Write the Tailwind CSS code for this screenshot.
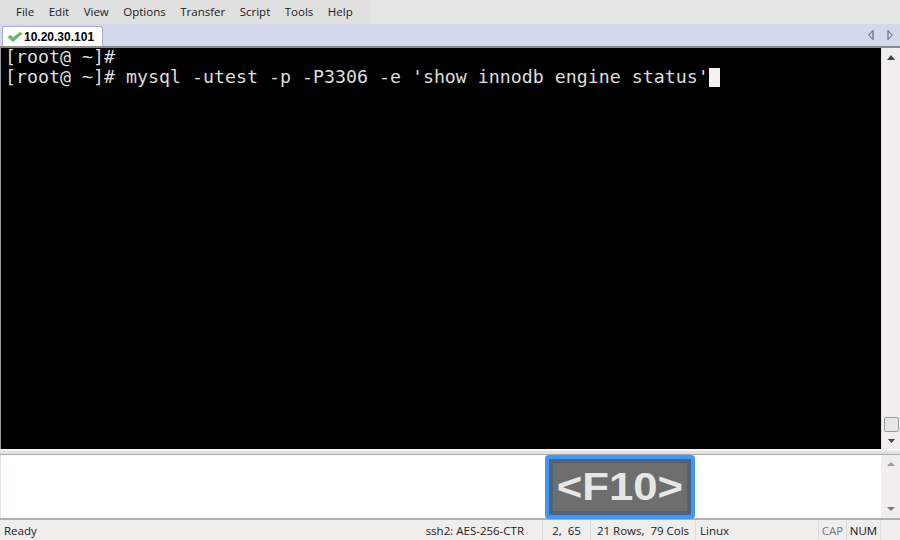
<!DOCTYPE html>
<html lang="en">
<head>
    <meta charset="UTF-8">
    <title>10.20.30.101</title>
    <script src="https://cdn.jsdelivr.net/npm/@tailwindcss/browser@4"></script>
</head>
<body class="w-[900px] h-[540px] overflow-hidden flex flex-col bg-[#f0eded] font-['Open_Sans','Liberation_Sans',sans-serif] text-[11.5px] text-[#111]">

    <!-- menu bar -->
    <div class="h-[24px] bg-[#e6e6e6] flex">
        <div class="w-[370px] bg-[#e0e0e0] flex items-center pl-[16px] pb-[1px] gap-[14.5px] text-[#1a1a1a]">
            <span>File</span><span>Edit</span><span>View</span><span>Options</span><span>Transfer</span><span>Script</span><span>Tools</span><span>Help</span>
        </div>
    </div>

    <!-- tab bar -->
    <div class="h-[22px] bg-[#d2d9ec] flex items-end justify-between pl-[2px]">
        <div class="h-[20px] w-[101px] bg-white border border-b-0 border-[#a9aebc] rounded-t-[3px] flex items-center pl-[4px] gap-[1px]">
            <svg width="16" height="13" viewBox="0 0 16 13"><path d="M.5 7l3-2 2.500 2.500L13 2l2.500 1.500L6 12z" fill="#62b562" stroke="#9bcf9b" stroke-width="0.5"/></svg>
            <span class="font-['Liberation_Sans',sans-serif] font-bold text-[12px] text-black">10.20.30.101</span>
        </div>
        <div class="flex items-center gap-[13px] h-[22px] pr-[7px]">
            <svg width="6" height="10" viewBox="0 0 6 10"><path d="M5 .5V9.500L.7 5z" fill="#d2d9ec" stroke="#555"/></svg>
            <svg width="6" height="10" viewBox="0 0 6 10"><path d="M1 .5V9.500L5.300 5z" fill="#d2d9ec" stroke="#555"/></svg>
        </div>
    </div>
    <div class="h-[2px] bg-[#8a8a8a]"></div>

    <!-- terminal -->
    <div class="h-[401px] flex">
        <div class="w-[881px] bg-black border-l border-[#999] text-[#dedede] pl-[4px] font-['DejaVu_Sans_Mono',monospace] text-[18.27px] leading-[20px]">
            <div class="mt-[-1px] whitespace-pre">[root@ ~]#</div>
            <div class="flex items-center"><span class="whitespace-pre">[root@ ~]# mysql -utest -p -P3306 -e 'show innodb engine status'</span><span class="w-[11px] h-[19px] bg-[#f2f2f2]"></span></div>
        </div>
        <div class="w-[19px] bg-[#f0eeee] border-l border-[#e4e4e4] flex flex-col items-center justify-between pt-[7px] pb-[6px]">
            <svg width="8" height="5" viewBox="0 0 8 5"><path d="M4 0l4 5H0z" fill="#444"/></svg>
            <div class="flex flex-col items-center gap-[7px]">
                <div class="w-[15px] h-[15px] bg-[#e6e6e6] border border-[#9a9a9a] rounded-[2px]"></div>
                <svg width="7" height="4" viewBox="0 0 7 4"><path d="M0 0h7L3.500 4z" fill="#444"/></svg>
            </div>
        </div>
    </div>

    <!-- splitter -->
    <div class="h-[6px] bg-[#e2e2e2] border-t-2 border-t-[#f4f4f4] border-b border-b-[#a8a8a8]"></div>

    <!-- command window -->
    <div class="h-[63px] flex bg-white border-l border-[#dde6ea] relative">
        <div class="flex-1"></div>
        <div class="w-[19px] bg-[#f0eeee] flex flex-col items-center justify-between py-[7px]">
            <svg width="8" height="4" viewBox="0 0 8 4"><path d="M4 0l4 4H0z" fill="#999"/></svg>
            <svg width="8" height="4" viewBox="0 0 8 4"><path d="M0 0h8L4 4z" fill="#777"/></svg>
        </div>
        <!-- key overlay -->
        <div class="absolute left-[544px] top-0 w-[150px] h-[64px] bg-[#3d99f5] rounded-[4px] p-[4px] z-10">
            <div class="w-full h-full bg-[#6e6e6e] border-[4px] border-[#4e6279] flex items-center justify-center overflow-hidden">
                <span class="scale-x-115 font-['Liberation_Sans',sans-serif] font-bold text-[38px] leading-none text-[#e6e6e6]">&lt;F10&gt;</span>
            </div>
        </div>
    </div>

    <!-- status bar -->
    <div class="flex-1 border-t-2 border-[#b0b0b0] flex items-center text-[#222] bg-[#f0eded]">
        <div class="w-[419px] pl-[4px] pt-[2px]">Ready</div>
        <div class="w-[124px] h-full border-r border-[#dcdcdc] flex items-center justify-end pr-[18px] pt-[2px]">ssh2: AES-256-CTR</div>
        <div class="w-[48px] h-full border-r border-[#dcdcdc] flex items-center justify-center pt-[2px] whitespace-pre">2,  65</div>
        <div class="w-[105px] h-full border-r border-[#dcdcdc] flex items-center justify-center pt-[2px] whitespace-pre">21 Rows,  79 Cols</div>
        <div class="w-[123px] h-full border-r border-[#dcdcdc] pl-[4px] pt-[2px] flex items-center">Linux</div>
        <div class="w-[28px] h-full border-r border-[#dcdcdc] flex items-center justify-center pt-[2px] text-[#777]">CAP</div>
        <div class="w-[34px] h-full border-r border-[#dcdcdc] flex items-center justify-center pt-[2px] text-[#111]">NUM</div>
    </div>
</body>
</html>
